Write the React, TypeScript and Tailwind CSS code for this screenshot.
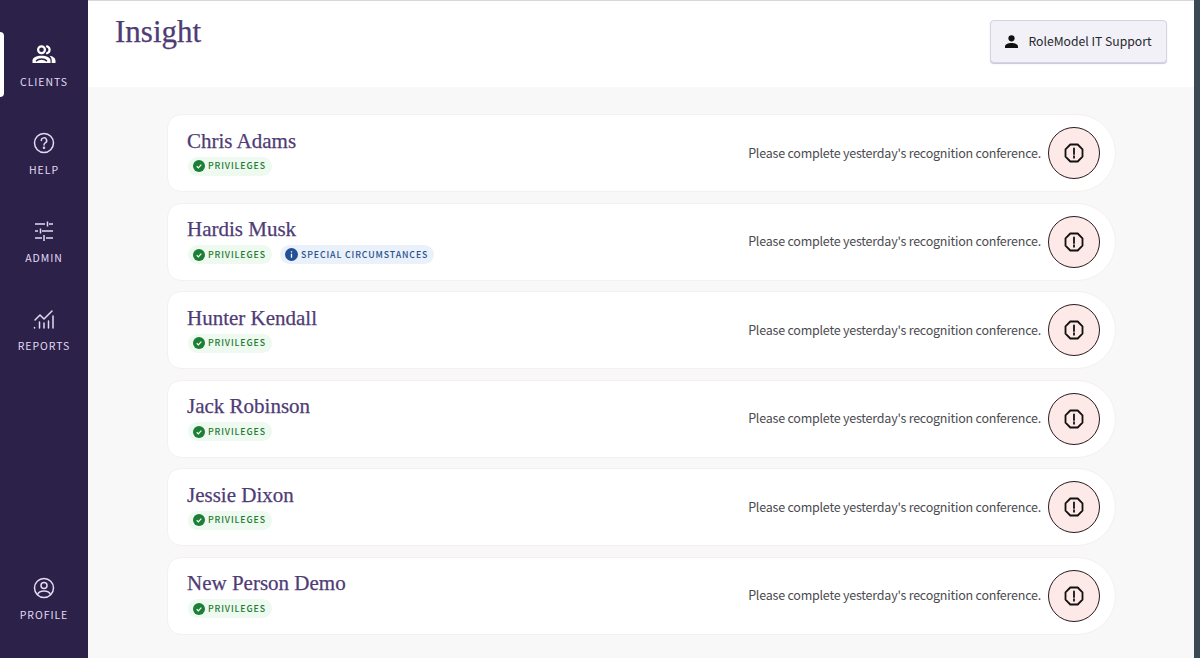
import type { ReactNode } from 'react'

const CLIENTS = [
  { name: 'Chris Adams' },
  { name: 'Hardis Musk', special: true },
  { name: 'Hunter Kendall' },
  { name: 'Jack Robinson' },
  { name: 'Jessie Dixon' },
  { name: 'New Person Demo' },
]

const sans = "font-['Noto_Sans_CJK_SC','Noto_Sans',sans-serif]"
const serif = "font-['Liberation_Serif',serif] [-webkit-text-stroke:0.25px_#4f3c75]"

function ClientsIcon() {
  return (
    <svg width="24" height="24" viewBox="0 0 24 24" fill="none" className="text-white">
      <circle cx="9.500" cy="6.800" r="3.400" stroke="currentColor" strokeWidth="2.200" />
      <path d="M15 3.400a3.600 3.600 0 0 1 0 6.900" stroke="currentColor" strokeWidth="2.200" strokeLinecap="round" />
      <path d="M.5 20v-2.500c0-3 4-4.800 9-4.800s9 1.800 9 4.800V20z" fill="currentColor" />
      <path d="M17.500 12.800c3.400.5 6 2.200 6 4.900V20h-3.800v-2.500c0-1.900-.9-3.400-2.200-4.700z" fill="currentColor" />
      <path d="M4.500 17.800c1-1.300 2.800-1.900 5-1.900s4 .6 5 1.900" stroke="#2b2149" strokeWidth="1.500" strokeLinecap="round" />
    </svg>
  )
}

function HelpIcon() {
  return (
    <svg width="24" height="24" viewBox="0 0 24 24" fill="none" stroke="currentColor" strokeWidth="1.500" strokeLinecap="round">
      <circle cx="12" cy="12" r="9.500" />
      <path d="M9.300 9.500a2.700 2.700 0 1 1 4 2.400c-.9.500-1.300 1-1.300 2" />
      <circle cx="12" cy="16.800" r=".5" fill="currentColor" />
    </svg>
  )
}

function AdminIcon() {
  return (
    <svg width="24" height="24" viewBox="0 0 24 24" fill="none" stroke="currentColor" strokeWidth="1.500">
      <path d="M3 5h10M17 5h4M15.500 2.500v5M3 12h3M10 12h11M8.500 9.500v5M3 19h7M14 19h7M12 16v6" />
    </svg>
  )
}

function ReportsIcon() {
  return (
    <svg width="24" height="24" viewBox="0 0 24 24" fill="none" stroke="currentColor" strokeWidth="1.500" strokeLinecap="round" strokeLinejoin="round">
      <path d="M3 13l5-5 4 4 8-8" />
      <path d="M2.500 21v-.5M7.500 21v-6M12 21v-5M16.500 21v-7M21 21V9" />
    </svg>
  )
}

function ProfileIcon() {
  return (
    <svg width="24" height="24" viewBox="0 0 24 24" fill="none" stroke="currentColor" strokeWidth="1.500" strokeLinecap="round">
      <circle cx="12" cy="12" r="9.500" />
      <circle cx="12" cy="9.500" r="3" />
      <path d="M5.500 18.500c1-2.500 3.500-3.500 6.500-3.500s5.500 1 6.500 3.500" />
    </svg>
  )
}

function NavItem({ icon, label, active }: { icon: ReactNode; label: string; active?: boolean }) {
  return (
    <div className="relative flex h-[88px] flex-col items-center justify-center gap-[8px] text-[#e4daf3]">
      {active && <div className="absolute left-0 top-[10px] h-[65px] w-[4px] rounded-r-sm bg-white" />}
      {icon}
      <span className="text-[10.500px] leading-[14px] tracking-[0.09em]">{label}</span>
    </div>
  )
}

function Badge({ color, label }: { color: 'green' | 'blue'; label: string }) {
  const green = color === 'green'
  return (
    <span
      className={`flex h-[19px] items-center gap-[3px] rounded-full pl-[5px] pr-[6px] text-[8.800px] font-medium tracking-[0.1em] ${
        green ? 'bg-[#eef9ef] text-[#1d7a35]' : 'bg-[#eaf1fa] text-[#28508f]'
      }`}
    >
      {green ? (
        <svg width="12" height="12" viewBox="0 0 13 13">
          <circle cx="6.500" cy="6.500" r="6.500" fill="#1b7f36" />
          <path d="M4 6.800l1.800 1.700L9 5" fill="none" stroke="white" strokeWidth="1.300" />
        </svg>
      ) : (
        <svg width="13" height="13" viewBox="0 0 13 13">
          <circle cx="6.500" cy="6.500" r="6.500" fill="#234f96" />
          <path d="M6.500 5.800v4M6.500 3.200v1.300" stroke="white" strokeWidth="1.300" />
        </svg>
      )}
      {label}
    </span>
  )
}

function ClientRow({ name, special }: { name: string; special?: boolean }) {
  return (
    <li className="flex h-[78px] items-center justify-between rounded-l-[14px] rounded-r-[39px] border border-[#f7efef] bg-white pl-[19px] pr-[15px]">
      <div className="flex flex-col gap-[2px] pb-[3px]">
        <h2 className={`${serif} text-[21px] leading-[27px] text-[#4f3c75]`}>{name}</h2>
        <div className="ml-[1px] flex gap-[8px]">
          <Badge color="green" label="PRIVILEGES" />
          {special && <Badge color="blue" label="SPECIAL CIRCUMSTANCES" />}
        </div>
      </div>
      <div className="flex items-center gap-[7px]">
        <span className="text-[12.500px] tracking-[-0.22px] text-[#4b4b50]">Please complete yesterday's recognition conference.</span>
        <div className="flex size-[52px] items-center justify-center rounded-full border border-[#2a1a1f] bg-[#fde9e7]">
          <svg width="20" height="20" viewBox="0 0 20 20" fill="none" stroke="#111" strokeWidth="1.800">
            <path d="M6.300 1.500h7.400l4.800 4.800v7.400l-4.800 4.800H6.300l-4.800-4.800V6.300z" strokeLinejoin="round" />
            <path d="M10 5.500v5.500M10 13.200v1.600" strokeLinecap="round" />
          </svg>
        </div>
      </div>
    </li>
  )
}

export default function App() {
  return (
    <div className={`${sans} flex h-[658px] w-[1200px] overflow-hidden bg-[#3a4a55]`}>
      <aside className="flex w-[88px] shrink-0 flex-col justify-between bg-[#2b2149] pb-[15px] pt-[22px]">
        <nav>
          <NavItem icon={<ClientsIcon />} label="CLIENTS" active />
          <NavItem icon={<HelpIcon />} label="HELP" />
          <NavItem icon={<AdminIcon />} label="ADMIN" />
          <NavItem icon={<ReportsIcon />} label="REPORTS" />
        </nav>
        <NavItem icon={<ProfileIcon />} label="PROFILE" />
      </aside>
      <div className="flex min-w-0 flex-1 flex-col bg-[#f9f8f8]">
        <header className="flex h-[87px] shrink-0 items-start justify-between border-t border-[#d8d8dc] bg-white pl-[27px] pr-[27px]">
          <h1 className={`${serif} mt-[11px] text-[31px] leading-[40px] text-[#4f3c75]`}>Insight</h1>
          <button
            type="button"
            className="mt-[19px] flex h-[43px] w-[177px] items-center justify-center gap-[10px] rounded border border-[#d6d4e4] bg-[#f2f1f8] text-[12.200px] text-[#26262b] shadow-[0_1px_1px_#c9c7d9]"
          >
            <svg width="13" height="13" viewBox="0 0 13 13" fill="#111">
              <circle cx="6.500" cy="3.300" r="3.100" />
              <path d="M0 13v-1.600C0 9.300 3 8 6.500 8s6.500 1.300 6.500 3.400V13z" />
            </svg>
            RoleModel IT Support
          </button>
        </header>
        <main className="flex-1 pl-[79px] pr-[78px] pt-[27px]">
          <ul className="flex flex-col gap-[10.500px]">
            {CLIENTS.map((c) => (
              <ClientRow key={c.name} name={c.name} special={c.special} />
            ))}
          </ul>
        </main>
      </div>
      <div className="w-[6px] shrink-0" />
    </div>
  )
}
